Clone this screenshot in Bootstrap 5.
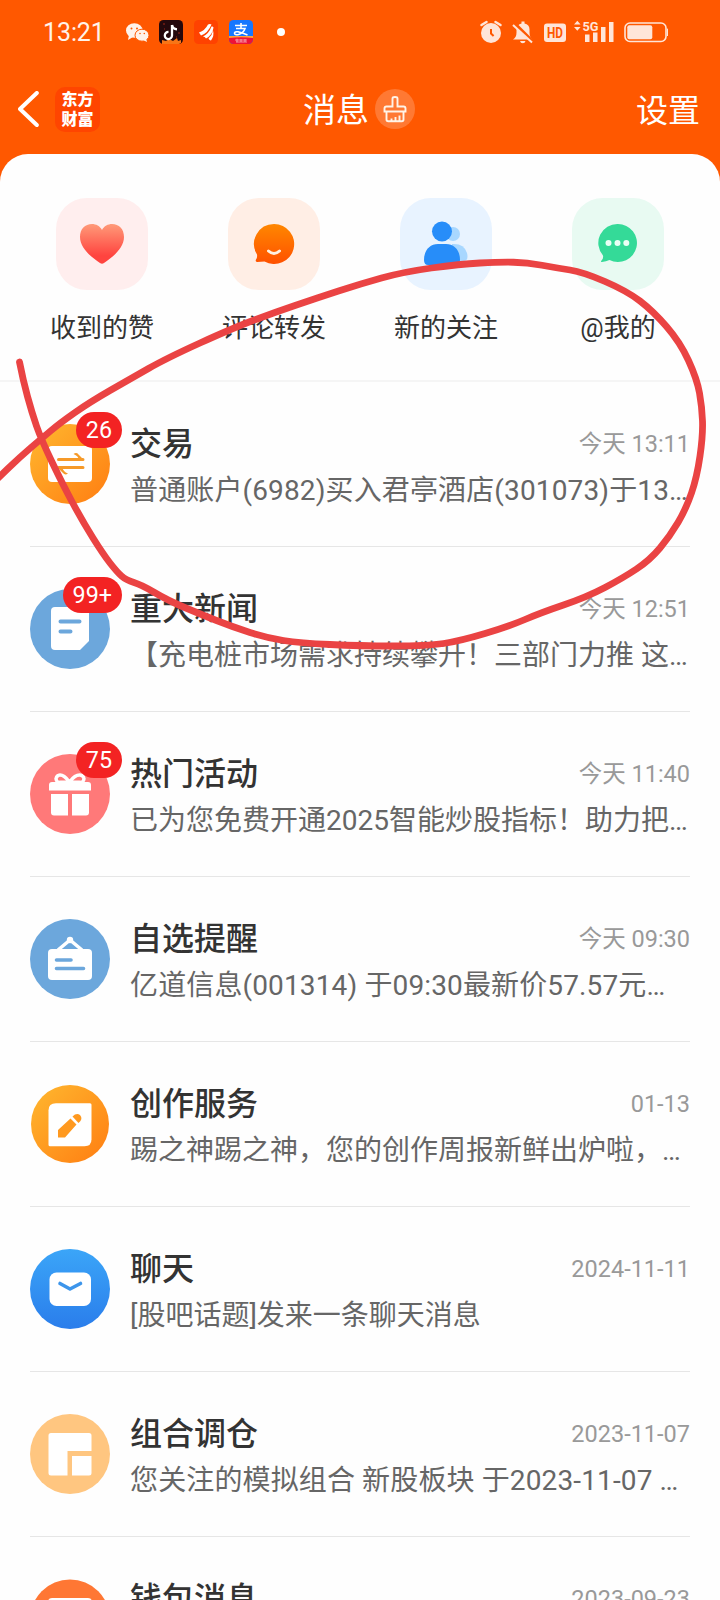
<!DOCTYPE html>
<html lang="zh-CN">
<head>
<meta charset="utf-8">
<meta name="viewport" content="width=device-width, initial-scale=1">
<title>消息</title>
<link href="https://cdn.jsdelivr.net/npm/bootstrap@5.3.0/dist/css/bootstrap.min.css" rel="stylesheet">
<style>
  body { font-family: Roboto, "Noto Sans CJK SC", sans-serif; background: #ff5800; color: #333; }
  .screen { width: 720px; height: 1600px; }
  svg { display: block; flex: none; }
  .status { height: 64px; padding: 0 52px 0 43px; }
  .clock { font-size: 25px; line-height: 64px; width: 82px; padding-top: 2px; letter-spacing: -.1px; color: #fff3ea; }
  .topbar { height: 90px; padding: 0 20px 0 18px; font-size: 32px; line-height: 90px; color: #fff; }
  .topbar .side { flex: 1 1 0; }
  .topbar .word { padding-top: 3px; }
  .heading { font-size: 33px; }
  .logo { width: 45px; height: 45px; border-radius: 10px; background: #ff4500; font: 900 16px/20px "Noto Sans CJK SC", sans-serif; margin: 0 0 0 16px; padding: 1px 0; }
  .panel { background: #fefefe; border-radius: 28px 28px 0 0; height: 1446px; overflow: hidden; }
  .cats { padding: 44px 16px 0; height: 228px; border-bottom: 2px solid #f5f5f5; }
  .cat { width: 172px; font-size: 26px; line-height: 36px; }
  .tile { width: 92px; height: 92px; border-radius: 31px; margin-bottom: 20px; }
  .msg { height: 165px; margin: 0 30px; padding: 42px 0 0; border-bottom: 1px solid #e6e6e6; }
  .pic { width: 80px; height: 80px; margin-right: 20px; }
  .count { top: -12px; right: -12px; height: 36px; padding: 0 10px; border-radius: 18px; background: #f32323; color: #fff; font-size: 23.300px; line-height: 36px; }
  .name { font-size: 32px; line-height: 40px; font-weight: 500; }
  .when { font-size: 23.500px; line-height: 40px; color: #999; }
  .brief { font-size: 28px; line-height: 36px; color: #666; margin-top: 9px; white-space: pre; }
  .brief.wide { letter-spacing: .13px; }
  .ink { left: 0; top: 0; pointer-events: none; }
</style>
</head>
<body>
<div class="screen position-relative overflow-hidden">
  <header>
    <div class="status d-flex align-items-center">
      <div class="clock">13:21</div>
      <svg width="24" height="24" viewBox="124 20 24 24"><ellipse cx="133.300" cy="30.500" rx="8.300" ry="7.300" fill="#fff3ea"/><path d="M128 35l-1 5 5-3z" fill="#fff3ea"/><ellipse cx="141" cy="35.200" rx="7" ry="6" fill="#fff3ea" stroke="#ff5800"/><path d="M142 40l4 2-1-4z" fill="#fff3ea"/><g fill="#ff5800"><circle cx="130.500" cy="28.500" r="1"/><circle cx="136" cy="28.500" r="1"/><circle cx="139" cy="33.500" r=".8"/><circle cx="143.300" cy="33.500" r=".8"/></g></svg>
      <svg style="margin-left:10px" width="24" height="24" viewBox="0 0 24 24"><rect width="24" height="24" rx="4.500" fill="#24080c"/><path d="M3 24v-4l4 1 3-2 4 2 4-3 1 3 3-1v3l-2 1z" fill="#f87516"/><path d="M4 4h2M19 13h2M5 9h1M17 17h1" stroke="#9b2618"/><path d="M13 5v10.500a3.600 3.600 0 1 1-3.500-3.600" fill="none" stroke="#fff" stroke-width="2.300"/><path d="M13 5q.7 4 5 4.400" fill="none" stroke="#fff" stroke-width="2.300"/></svg>
      <svg style="margin-left:11px" width="24" height="24" viewBox="0 0 24 24"><rect width="24" height="24" rx="4.500" fill="#ff4200"/><path d="M5 12.500Q11 10.500 14 4.500q2-1 3.500 0Q14 13 7 15.500q-1-1.500-2-3zM9 16.500q6-3 8.500-10 1.500-.5 2 1Q18.500 15 12 18.500q-1-2-3-2zM14.500 18.500q4-4 4.500-8 1.500 5-2 10-1.500 0-2.500-2z" fill="#fff"/></svg>
      <svg style="margin-left:11px" width="24" height="24" viewBox="0 0 24 24"><rect width="24" height="24" rx="4.500" fill="#1677ff"/><path d="M0 17h24v2.500a4.500 4.500 0 0 1-4.500 4.500h-15A4.500 4.500 0 0 1 0 19.500z" fill="#ee1237"/><path d="M0 16h24v2q-12-1.500-24 0z" fill="#ffa13a"/><path d="M6 5.500h12M12 3v5.500M7 8.500h9q-1.500 4.500-6.500 6-4 .8-4-1.200 0-2 3.500-1.500 4 1 9.500 3.200" fill="none" stroke="#fff" stroke-width="1.600"/><path d="M6 20h12M7 22h11M8 18.700v3.500M12 19v3M16 19v3" stroke="#fff" stroke-width=".7" opacity=".75"/></svg>
      <svg style="margin-left:24px" width="8" height="8"><circle cx="4" cy="4" r="4" fill="#fff"/></svg>
      <svg class="ms-auto" width="190" height="28" viewBox="478 18 190 28">
        <g fill="#ffe5d8" stroke="none">
          <circle cx="491" cy="33" r="10"/><path d="M491 29v4.500l2.600 2.500" fill="none" stroke="#ff5800" stroke-width="2"/><path d="M481.500 25l5-3M495.500 22l5 3" stroke="#ffe5d8" stroke-width="2.500" stroke-linecap="round"/>
          <path d="M513 39.500q3.500-2 3.500-7v-3q.5-5 5-6v-2h3v2q5 1 5 6v3q0 5 3 7zM520 41h5.500q-.5 2.300-2.700 2.300T520 41z"/><path d="M513.500 22.500l20 20" stroke="#ff5800" stroke-width="3.600"/><path d="M513 25l19 17.500" stroke="#ffe5d8" stroke-width="2"/>
          <rect x="544" y="23.500" width="22" height="18.500" rx="3"/>
          <text x="555" y="38" font-family="Roboto" font-weight="700" font-size="14.500" text-anchor="middle" fill="#ff5800" textLength="16" lengthAdjust="spacingAndGlyphs">HD</text>
          <path d="M574 24.500l3.300-3.800 3.300 3.800zM574 27l3.300 3.800 3.300-3.800zM585 34.500h4.500V42H585zM593 32.500h4.500V42H593zM601 27h4.500v15H601zM609 22h4.500v20H609z"/>
          <text x="582.500" y="30.500" font-family="Roboto" font-weight="700" font-size="13" textLength="16" lengthAdjust="spacingAndGlyphs">5G</text>
          <rect x="625" y="23" width="41" height="18.500" rx="5" fill="none" stroke="#ffe5d8" stroke-width="1.600"/><rect x="627.300" y="25.300" width="25" height="14" rx="2"/><path d="M667 28.500q2 0 2 4t-2 3.500z"/>
        </g>
      </svg>
    </div>
    <div class="topbar d-flex align-items-center">
      <div class="side d-flex align-items-center">
        <svg width="21" height="36"><path d="M18.800 2L2 18l16.800 16" fill="none" stroke="#fff" stroke-width="4" stroke-linecap="round" stroke-linejoin="round"/></svg>
        <div class="logo text-center"><div>东方</div><div>财富</div></div>
      </div>
      <div class="d-flex align-items-center"><span class="heading word">消息</span>
        <svg style="margin-left:6px" width="40" height="40"><circle cx="20" cy="20" r="20" fill="#fff" opacity=".2"/><path d="M17.500 17.500v-8q0-1.500 2.500-1.500t2.500 1.500v8h6q2 0 2 2v3h-21v-3q0-2 2-2zM11.500 23v7.500q0 1.700 1.700 1.700h13.600q1.700 0 1.700-1.700V23M16.500 31.500v-2M20.500 31.500v-3.500M24.500 31.500v-5" fill="none" stroke="#fff4e8" stroke-width="1.900"/></svg>
      </div>
      <div class="side text-end word">设置</div>
    </div>
  </header>

  <main class="panel">
    <nav class="cats d-flex">
      <div class="cat d-flex flex-column align-items-center">
        <div class="tile" style="background:#ffeeee"><svg width="92" height="92"><defs><linearGradient id="heart" x2="0" y2="1"><stop stop-color="#ff9a79"/><stop offset=".8" stop-color="#ff443f"/></linearGradient></defs><path d="M46 32c2-4 6-6 10-6 7 0 12 5 12 13 0 11-11 20-20 26q-2 1.500-4 0C35 59 24 50 24 39c0-8 5-13 12-13 4 0 8 2 10 6z" fill="url(#heart)"/></svg></div>收到的赞</div>
      <div class="cat d-flex flex-column align-items-center">
        <div class="tile" style="background:#ffeee5"><svg width="92" height="92"><defs><linearGradient id="chat" x2="0" y2="1"><stop stop-color="#ff8700"/><stop offset="1" stop-color="#ff5100"/></linearGradient></defs><path d="M46 26a20 20 0 1 1-9.500 37.500Q33 63.500 29 64q-2-.3-1-2.500 1.500-2 1-5A20 20 0 0 1 46 26z" fill="url(#chat)"/><path d="M40.500 53q5.500 5 11 0" fill="none" stroke="#fff0e2" stroke-width="3" stroke-linecap="round"/></svg></div>评论转发</div>
      <div class="cat d-flex flex-column align-items-center">
        <div class="tile" style="background:#e8f3ff"><svg width="92" height="92"><g fill="#a8d7ff"><circle cx="53" cy="36" r="7"/><path d="M52 46q12-1 15 9 2 8-4 8H52z"/></g><g fill="#278df9"><circle cx="42" cy="33.500" r="10"/><path d="M24 62c0-10 6-16 14-16h8c8 0 14 6 14 16q0 5-4 5H28q-4 0-4-5z"/></g></svg></div>新的关注</div>
      <div class="cat d-flex flex-column align-items-center">
        <div class="tile" style="background:#e8faf2"><svg width="92" height="92"><path d="M46 26a19 19 0 1 1-8.500 36Q34 63.500 30 64q-2-.2 0-2 1.500-2 1-4.500A19 19 0 0 1 46 26z" fill="#34da98"/><g fill="#eafff5"><circle cx="36.500" cy="45" r="3"/><circle cx="45.500" cy="45" r="3"/><circle cx="54.300" cy="45" r="3"/></g></svg></div>@我的</div>
    </nav>

    <section>
      <article class="msg d-flex">
        <div class="pic position-relative"><svg width="80" height="80"><defs><linearGradient id="gold" x2="1" y2="1"><stop offset=".1" stop-color="#ffb22c"/><stop offset=".95" stop-color="#ff8013"/></linearGradient></defs><circle cx="40" cy="40" r="40" fill="url(#gold)"/><rect x="18" y="22" width="44" height="36" rx="4" fill="#fff"/><path d="M28.500 35.500H53M53 43.500H28.500" fill="none" stroke="#f69a29" stroke-width="3" stroke-linecap="round"/><path d="M43.500 30q3-2 5 .5l5.500 5.500h-5q-.5-4-5.500-6zM38 49.500q-3 2-5-.5l-5.500-5.500h5q.5 4 5.500 6z" fill="#f69a29"/></svg><span class="count position-absolute">26</span></div>
        <div class="flex-grow-1"><div class="d-flex justify-content-between"><div class="name">交易</div><div class="when">今天 13:11</div></div><div class="brief wide">普通账户(6982)买入君亭酒店(301073)于13…</div></div>
      </article>
      <article class="msg d-flex">
        <div class="pic position-relative"><svg width="80" height="80"><circle cx="40" cy="40" r="40" fill="#6ca7dc"/><path d="M25 18h30q4 0 4 4v30L50 61H25q-4 0-4-4V22q0-4 4-4z" fill="#fff"/><path d="M30.500 32.500h19M30.500 42.500h10" stroke="#6ca7dc" stroke-width="4" stroke-linecap="round"/></svg><span class="count position-absolute">99+</span></div>
        <div class="flex-grow-1"><div class="d-flex justify-content-between"><div class="name">重大新闻</div><div class="when">今天 12:51</div></div><div class="brief">【充电桩市场需求持续攀升！三部门力推 这…</div></div>
      </article>
      <article class="msg d-flex">
        <div class="pic position-relative"><svg width="80" height="80"><circle cx="40" cy="40" r="40" fill="#ff7979"/><path d="M39 27.500q-6-8-11-6-4 3 0 7zM40 27.500q6-8 12-6 4 3 0 7z" fill="none" stroke="#fff" stroke-width="3.500"/><path d="M22 28h36q3 0 3 3v5.500H19V31q0-3 3-3zM21 40h17v21.500H24q-3 0-3-3zM42 40h17v18.500q0 3-3 3H42z" fill="#fff"/></svg><span class="count position-absolute">75</span></div>
        <div class="flex-grow-1"><div class="d-flex justify-content-between"><div class="name">热门活动</div><div class="when">今天 11:40</div></div><div class="brief">已为您免费开通2025智能炒股指标！助力把…</div></div>
      </article>
      <article class="msg d-flex">
        <div class="pic"><svg width="80" height="80"><circle cx="40" cy="40" r="40" fill="#6ca7dc"/><path d="M28 31l12-10 12 10" fill="none" stroke="#fff" stroke-width="3.500"/><circle cx="40" cy="21" r="3.200" fill="#fff"/><rect x="18" y="30" width="44" height="31" rx="4" fill="#fff"/><path d="M26.500 41h14.500M26.500 49.500h27" stroke="#6ca7dc" stroke-width="3.600" stroke-linecap="round"/></svg></div>
        <div class="flex-grow-1"><div class="d-flex justify-content-between"><div class="name">自选提醒</div><div class="when">今天 09:30</div></div><div class="brief wide">亿道信息(001314) 于09:30最新价57.57元…</div></div>
      </article>
      <article class="msg d-flex">
        <div class="pic"><svg width="80" height="80"><circle cx="40" cy="40" r="39" fill="url(#gold)"/><path transform="translate(0 -1.700)" d="M26 21h34a1.500 1.500 0 0 1 1.500 1.500V57q0 7-7 7H20a1.500 1.500 0 0 1-1.500-1.500V28q0-7 7.500-7z" fill="#fff"/><path transform="translate(0 -2)" d="M28 55.500v-7.500l12.500-11.500 6 6L35 55.500zM42.500 34.500q4-4 7.500-1.500 3.500 4-1.500 8z" fill="#ff991f"/></svg></div>
        <div class="flex-grow-1"><div class="d-flex justify-content-between"><div class="name">创作服务</div><div class="when">01-13</div></div><div class="brief">踢之神踢之神，您的创作周报新鲜出炉啦，…</div></div>
      </article>
      <article class="msg d-flex">
        <div class="pic"><svg width="80" height="80"><defs><linearGradient id="sky" x2="0" y2="1"><stop stop-color="#3ba5f8"/><stop offset="1" stop-color="#2a7deb"/></linearGradient></defs><circle cx="40" cy="40" r="40" fill="url(#sky)"/><rect x="19.500" y="23.500" width="41.500" height="33.500" rx="7" fill="#fff"/><path d="M30 34.500l10 5.500 10.500-5.500" fill="none" stroke="#3c95eb" stroke-width="3.600" stroke-linecap="round" stroke-linejoin="round"/></svg></div>
        <div class="flex-grow-1"><div class="d-flex justify-content-between"><div class="name">聊天</div><div class="when">2024-11-11</div></div><div class="brief">[股吧话题]发来一条聊天消息</div></div>
      </article>
      <article class="msg d-flex">
        <div class="pic"><svg width="80" height="80"><circle cx="40" cy="40" r="40" fill="#ffc680"/><path d="M21 19h38q2.500 0 2.500 2.500V37H37.500v24.500H21q-2.500 0-2.500-2.500V21.500Q18.500 19 21 19zM42 42h19.500v17q0 2.500-2.500 2.500H42z" fill="#fff"/></svg></div>
        <div class="flex-grow-1"><div class="d-flex justify-content-between"><div class="name">组合调仓</div><div class="when">2023-11-07</div></div><div class="brief wide">您关注的模拟组合 新股板块 于2023-11-07 …</div></div>
      </article>
      <article class="msg d-flex">
        <div class="pic"><svg width="80" height="80"><circle cx="40" cy="40.500" r="40" fill="#ff7734"/><rect x="18" y="19" width="44" height="40" rx="4" fill="#fff"/></svg></div>
        <div class="flex-grow-1"><div class="d-flex justify-content-between"><div class="name">钱包消息</div><div class="when">2023-09-23</div></div></div>
      </article>
    </section>
  </main>

  <svg class="ink position-absolute" width="720" height="700"><path id="stroke" fill="none" stroke="#ea4343" stroke-width="6.800" stroke-linecap="round" stroke-linejoin="round"/></svg>
</div>
<script src="https://cdn.jsdelivr.net/npm/bootstrap@5.3.0/dist/js/bootstrap.bundle.min.js"></script>
<script>
  // Freehand pen stroke, smoothed through the midpoints of its samples
  const pts = [[19.5,362],[23,380],[32,413],[41,439],[63,485],[83,522],[103,554],[117,572],[126,580],[142,585],[167,600],[200,614],[233,627],[267,638],[300,643],[360,646],[427,646],[460,641],[510,626],[540,613],[587,597],[623,578],[650,560],[670,536],[686,509],[697,477],[703,435],[702,407],[697,379],[680,342],[653,311],[627,291],[583,272],[557,268],[527,262.5],[500,262],[460,264],[403,272],[360,284],[317,298],[273,313],[233,328],[167,358],[130,379],[90,402],[60,423],[41,439],[20,457],[-4,480]];
  let d = "M" + pts[0];
  for (let i = 1; i < pts.length - 1; i++) {
    const [x, y] = pts[i], [u, v] = pts[i + 1];
    d += "Q" + [x, y, (x + u) / 2, (y + v) / 2];
  }
  document.getElementById("stroke").setAttribute("d", d + "L" + pts[pts.length - 1]);
</script>
</body>
</html>
